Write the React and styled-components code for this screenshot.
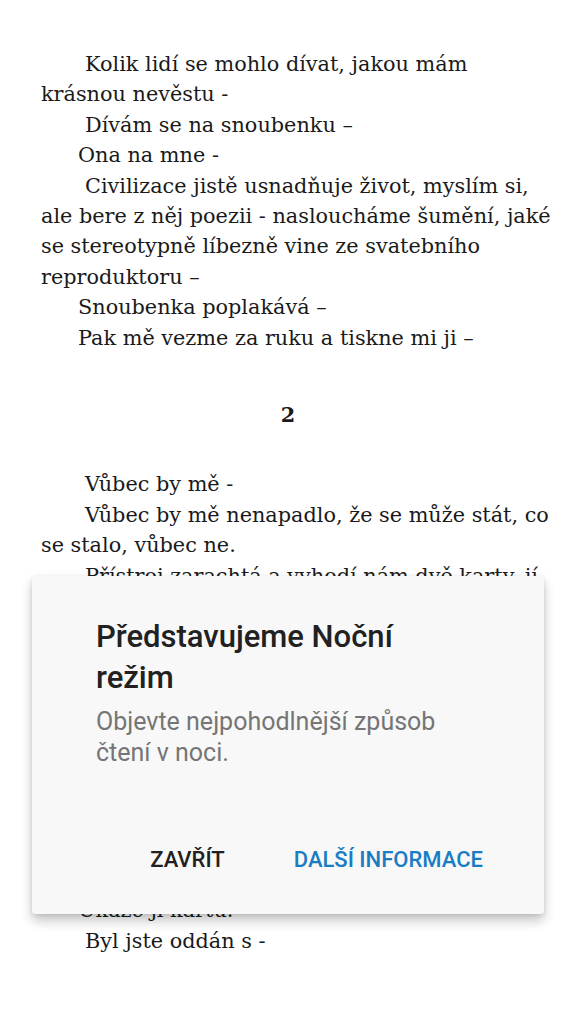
import React from "react"
import styled, { createGlobalStyle } from "styled-components"

const Global = createGlobalStyle`
  html, body {
    margin: 0;
    padding: 0;
    background: #ffffff;
  }
  body {
    width: 576px;
    height: 1024px;
    overflow: hidden;
  }
`

const Screen = styled.div`
  position: relative;
  width: 576px;
  height: 1024px;
  overflow: hidden;
  background: #ffffff;
`

const Page = styled.div`
  padding: 49px 20px 0 41px;
  font-family: "DejaVu Serif", "Liberation Serif", serif;
  font-size: 20.8px;
  line-height: 30.4px;
  color: #1a1a1a;
`

const Para = styled.p`
  margin: 0;
  text-indent: ${(p) => (p.$short ? "37px" : "44px")};
`

const Chapter = styled.h2`
  margin: 0;
  padding: 47px 21px 39px 0;
  text-align: center;
  font-size: 20.8px;
  font-weight: bold;
  line-height: 30.4px;
`

const Dialog = styled.div`
  position: absolute;
  left: 32px;
  top: 576px;
  width: 512px;
  height: 338px;
  background: #f8f8f8;
  border-radius: 3px;
  box-shadow: 0 7px 12px rgba(0, 0, 0, 0.22), 0 1px 4px rgba(0, 0, 0, 0.1);
  font-family: Roboto, "Noto Sans", sans-serif;
  display: flex;
  flex-direction: column;
`

const Content = styled.div`
  padding: 40px 96px 0 64px;
`

const Title = styled.h1`
  margin: 0;
  font-size: 31px;
  font-weight: 500;
  line-height: 41px;
  color: #212121;
`

const Message = styled.p`
  margin: 8px 0 0;
  font-size: 25px;
  line-height: 31px;
  color: #757575;
`

const Actions = styled.div`
  margin-top: auto;
  padding: 0 61px 42px 0;
  display: flex;
  justify-content: flex-end;
  gap: 69px;
`

const Action = styled.button`
  border: none;
  background: none;
  padding: 0;
  font-family: Roboto, "Noto Sans", sans-serif;
  font-size: 22px;
  font-weight: 500;
  color: ${(p) => (p.$primary ? "#1a7dc4" : "#212121")};
`

const chapterOne = [
  { t: "Kolik lidí se mohlo dívat, jakou mám krásnou nevěstu -" },
  { t: "Dívám se na snoubenku –" },
  { t: "Ona na mne -", short: true },
  { t: "Civilizace jistě usnadňuje život, myslím si, ale bere z něj poezii - nasloucháme šumění, jaké se stereotypně líbezně vine ze svatebního reproduktoru –" },
  { t: "Snoubenka poplakává –", short: true },
  { t: "Pak mě vezme za ruku a tiskne mi ji –", short: true },
]

const chapterTwo = [
  { t: "Vůbec by mě -" },
  { t: "Vůbec by mě nenapadlo, že se může stát, co se stalo, vůbec ne." },
  { t: "Přístroj zarachtá a vyhodí nám dvě karty, jí a mně." },
  { t: "Díváme se na ně -" },
  { t: "Úředník je vezme –", short: true },
  { t: "Prohlédne si je -" },
  { t: "Zavrtí hlavou –", short: true },
  { t: "Něco je v nepořádku -" },
  { t: "Snoubenka zbledne –", short: true },
  { t: "Úředník odejde -" },
  { t: "Vrátí se s jiným –", short: true },
  { t: "Ten se na mě podívá -" },
  { t: "Ukáže jí kartu.", short: true },
  { t: "Byl jste oddán s -" },
]

export default function App() {
  return (
    <Screen>
      <Global />
      <Page>
        {chapterOne.map((p, i) => (
          <Para key={i} $short={p.short}>{p.t}</Para>
        ))}
        <Chapter>2</Chapter>
        {chapterTwo.map((p, i) => (
          <Para key={i} $short={p.short}>{p.t}</Para>
        ))}
      </Page>
      <Dialog>
        <Content>
          <Title>Představujeme Noční režim</Title>
          <Message>Objevte nejpohodlnější způsob čtení v noci.</Message>
        </Content>
        <Actions>
          <Action>ZAVŘÍT</Action>
          <Action $primary>DALŠÍ INFORMACE</Action>
        </Actions>
      </Dialog>
    </Screen>
  )
}
